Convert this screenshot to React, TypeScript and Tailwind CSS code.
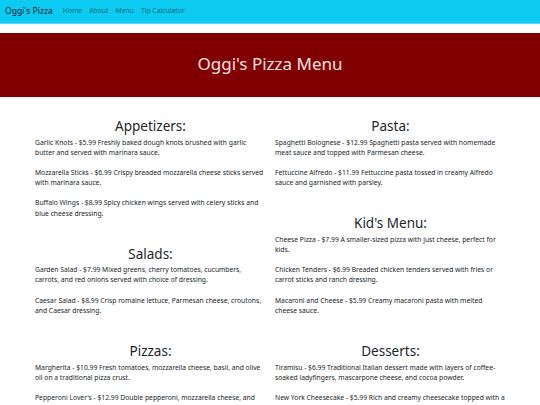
import React from "react";

const left = [
  {
    title: "Appetizers:",
    items: [
      "Garlic Knots - $5.99 Freshly baked dough knots brushed with garlic butter and served with marinara sauce.",
      "Mozzarella Sticks - $6.99 Crispy breaded mozzarella cheese sticks served with marinara sauce.",
      "Buffalo Wings - $8.99 Spicy chicken wings served with celery sticks and blue cheese dressing.",
    ],
  },
  {
    title: "Salads:",
    items: [
      "Garden Salad - $7.99 Mixed greens, cherry tomatoes, cucumbers, carrots, and red onions served with choice of dressing.",
      "Caesar Salad - $8.99 Crisp romaine lettuce, Parmesan cheese, croutons, and Caesar dressing.",
    ],
  },
  {
    title: "Pizzas:",
    items: [
      "Margherita - $10.99 Fresh tomatoes, mozzarella cheese, basil, and olive oil on a traditional pizza crust.",
      "Pepperoni Lover's - $12.99 Double pepperoni, mozzarella cheese, and tomato sauce on a traditional pizza crust.",
    ],
  },
];

const right = [
  {
    title: "Pasta:",
    items: [
      "Spaghetti Bolognese - $12.99 Spaghetti pasta served with homemade meat sauce and topped with Parmesan cheese.",
      "Fettuccine Alfredo - $11.99 Fettuccine pasta tossed in creamy Alfredo sauce and garnished with parsley.",
    ],
  },
  {
    title: "Kid's Menu:",
    items: [
      "Cheese Pizza - $7.99 A smaller-sized pizza with just cheese, perfect for kids.",
      "Chicken Tenders - $6.99 Breaded chicken tenders served with fries or carrot sticks and ranch dressing.",
      "Macaroni and Cheese - $5.99 Creamy macaroni pasta with melted cheese sauce.",
    ],
  },
  {
    title: "Desserts:",
    items: [
      "Tiramisu - $6.99 Traditional Italian dessert made with layers of coffee-soaked ladyfingers, mascarpone cheese, and cocoa powder.",
      "New York Cheesecake - $5.99 Rich and creamy cheesecake topped with a strawberry sauce.",
    ],
  },
];

function Section({ title, items }: { title: string; items: string[] }) {
  return (
    <div className="flex flex-col pb-[17px]">
      <h2 className="text-center text-[13.5px] leading-[16px] text-[#212529] mb-[3.5px]">{title}</h2>
      {items.map((t) => (
        <p key={t} className="text-[6.75px] leading-[10.2px] text-[#212529] mb-[10px]">
          {t}
        </p>
      ))}
    </div>
  );
}

export default function App() {
  return (
    <div className="w-[540px] h-[405px] overflow-hidden bg-white" style={{ fontFamily: '"Noto Sans", sans-serif' }}>
      <nav className="h-[24px] bg-[#0dcaf0] border-b border-[#5ad9f3] flex items-center px-[5px]">
        <span className="text-[8.6px] text-[rgba(0,0,0,0.9)] mr-[10px]">Oggi's Pizza</span>
        <div className="flex gap-[7px] text-[6.8px] text-[rgba(0,0,0,0.55)]">
          <span>Home</span>
          <span>About</span>
          <span>Menu</span>
          <span>Tip Calculator</span>
        </div>
      </nav>
      <div className="h-[9px]" />
      <header className="h-[64px] bg-[#800000] flex items-center justify-center">
        <h1 className="text-[17px] text-[#f3e0e0] -mt-[2px]">Oggi's Pizza Menu</h1>
      </header>
      <main className="flex gap-[9px] pl-[35px] pr-[34px] pt-[21px]">
        <div className="flex-1 flex flex-col">
          {left.map((s) => (
            <Section key={s.title} {...s} />
          ))}
        </div>
        <div className="flex-1 flex flex-col">
          {right.map((s) => (
            <Section key={s.title} {...s} />
          ))}
        </div>
      </main>
    </div>
  );
}
